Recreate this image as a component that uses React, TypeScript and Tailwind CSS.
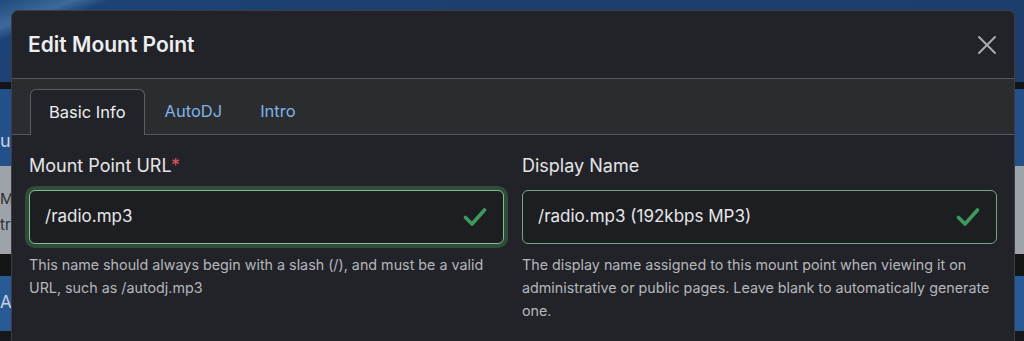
import React from "react";

function Check() {
  return (
    <svg width="24" height="20" viewBox="0 0 24 20" fill="none">
      <path d="M2.5 10.5 L9 17 L21.5 3" stroke="#3e9a5c" strokeWidth="3.6" strokeLinecap="round" strokeLinejoin="round" />
    </svg>
  );
}

function Field({ label, required, value, help, focused }: { label: string; required?: boolean; value: string; help: string; focused?: boolean }) {
  return (
    <div className="flex flex-col">
      <div className="text-[18px] leading-[24px] text-[#e4e5e7] mt-[19px]">
        {label}
        {required && <span className="text-[#e0525a]">*</span>}
      </div>
      <div
        className={
          "mt-[12px] h-[54px] rounded-[6px] border bg-[#1d1e22] flex items-center justify-between pl-[15px] pr-[16px] " +
          (focused ? "border-[#82bd94] shadow-[0_0_0_4px_#2f4d39]" : "border-[#76a584]")
        }
      >
        <span className="text-[17px] text-[#e6e7e9]">{value}</span>
        <Check />
      </div>
      <div className="mt-[9px] text-[14.3px] leading-[23px] text-[#b4b7bc]">{help}</div>
    </div>
  );
}

export default function App() {
  return (
    <div className="relative w-[1024px] h-[341px] overflow-hidden bg-[#191a1d]" style={{ fontFamily: "Inter, Roboto, 'Noto Sans', sans-serif" }}>
      {/* background page */}
      <div className="flex flex-col w-full h-full">
        <div className="h-[82px] bg-[linear-gradient(160deg,#1f4a7c_0%,#3c6a9a_6%,#1d4275_9%,#1e3f6e_40%,#1d3d6b_100%)]" />
        <div className="h-[7px] bg-[#131416]" />
        <div className="h-[77px] bg-[#24508a] text-[#c7d3e2] text-[18px] pl-[0px] pt-[38px]">u</div>
        <div className="h-[88px] bg-[#9ea3aa] text-[#2b2e33] text-[15px] leading-[26px] pt-[20px]">
          <div>Mo</div>
          <div>tr</div>
        </div>
        <div className="h-[22px] bg-[#141517]" />
        <div className="h-[55px] bg-[#285a96] text-[#c7d3e2] text-[17px] pt-[14px]">A</div>
        <div className="flex-1 bg-[#17181b]" />
      </div>

      {/* modal */}
      <div className="absolute left-[11px] top-[10px] w-[1004px] h-[340px] rounded-t-[7px] border border-[#3b3d42] bg-[#222328] flex flex-col">
        <div className="h-[68px] flex items-center justify-between pl-[16px] pr-[17px] border-b border-[#55575c]">
          <div className="text-[21px] font-semibold text-[#eceef0]">Edit Mount Point</div>
          <svg width="20" height="20" viewBox="0 0 20 20" className="mt-[1px]">
            <path d="M2 2 L18 18 M18 2 L2 18" stroke="#a9abaf" strokeWidth="2" strokeLinecap="round" />
          </svg>
        </div>
        <div className="h-[56px] bg-[#2b2c30] border-b border-[#55575c] flex items-end pl-[18px]">
          <div className="h-[46px] -mb-px px-[18px] flex items-center rounded-t-[6px] border border-b-0 border-[#5b5d62] bg-[#222328] text-[16.5px] text-[#eceef0]">Basic Info</div>
          <div className="h-[46px] px-[18px] ml-[2px] flex items-center text-[16.5px] text-[#7fb3e6]">AutoDJ</div>
          <div className="h-[46px] px-[18px] ml-[2px] flex items-center text-[16.5px] text-[#7fb3e6]">Intro</div>
        </div>
        <div className="grid grid-cols-2 gap-[18px] px-[17px]">
          <Field
            label="Mount Point URL"
            required
            value="/radio.mp3"
            focused
            help="This name should always begin with a slash (/), and must be a valid URL, such as /autodj.mp3"
          />
          <Field
            label="Display Name"
            value="/radio.mp3 (192kbps MP3)"
            help="The display name assigned to this mount point when viewing it on administrative or public pages. Leave blank to automatically generate one."
          />
        </div>
      </div>
    </div>
  );
}
